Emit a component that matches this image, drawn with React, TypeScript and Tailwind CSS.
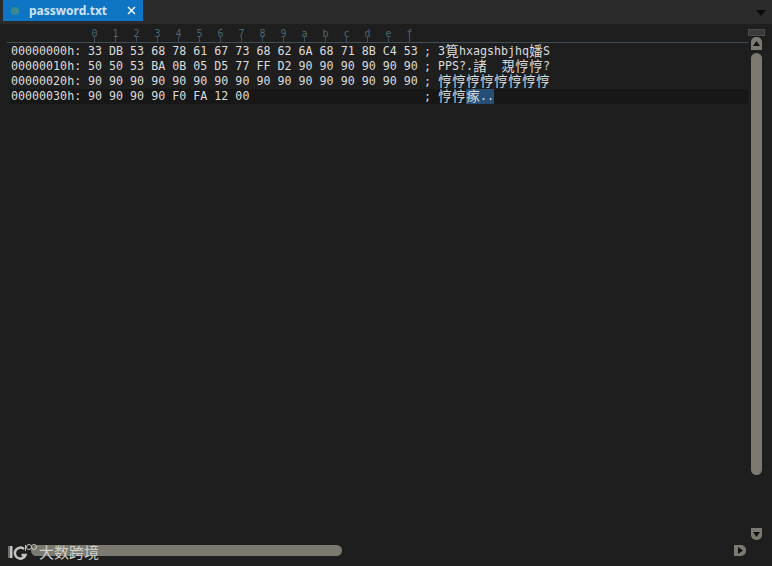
const rows = [
  { a: "00000000h:", h: "33 DB 53 68 78 61 67 73 68 62 6A 68 71 8B C4 53", t: "3筧hxagshbjhq嬏S" },
  { a: "00000010h:", h: "50 50 53 BA 0B 05 D5 77 FF D2 90 90 90 90 90 90", t: "PPS?.諸  覝悙悙?" },
  { a: "00000020h:", h: "90 90 90 90 90 90 90 90 90 90 90 90 90 90 90 90", t: "悙悙悙悙悙悙悙悙" },
];
const ticks = ["0","1","2","3","4","5","6","7","8","9","a","b","c","d","e","f"];

function Chars({ t }: { t: string }) {
  return (
    <>
      {Array.from(t).map((c, i) =>
        c.charCodeAt(0) > 255 ? (
          <span key={i} className="inline-block w-[14px] text-center text-[13.5px] leading-[15px]">{c}</span>
        ) : (
          <span key={i} className="inline-block w-[7px] leading-[15px]">{c}</span>
        )
      )}
    </>
  );
}

function Row({ a, h, t, active, sel }: { a: string; h: string; t: string; active?: boolean; sel?: string }) {
  return (
    <div className={`ml-[10px] flex h-[15px] items-center pl-[1px] whitespace-pre ${active ? "bg-[#171717]" : ""}`}>
      <span className="w-[77px]">{a}</span>
      <span className="w-[336px]">{h}</span>
      <span className="w-[14px]">;</span>
      <span className="flex"><Chars t={t} /></span>
      {sel && <span className="flex bg-[#264f78]"><Chars t={sel} /></span>}
    </div>
  );
}

export default function App() {
  return (
    <div className="relative flex h-[566px] w-[772px] flex-col overflow-hidden bg-[#1e1e1e] font-['DejaVu_Sans_Mono','Noto_Sans_CJK_SC',monospace] text-[11.67px] text-[#dcdcdc]">
      <div className="flex h-[24px] shrink-0 items-start justify-between bg-[#2b2b2b] pl-[3px] pr-[6px]">
        <div className="flex h-[21px] w-[140px] items-center bg-[#0e74c4] pl-[8px] pr-[7px] font-['Noto_Sans',sans-serif] text-[12px] font-bold text-[#cfe3f3]">
          <span className="h-[8px] w-[8px] rounded-full bg-[#3d8a8c]" />
          <span className="ml-[10px] flex-1">password.txt</span>
          <svg width="9" height="9" viewBox="0 0 9 9" className="text-white"><path d="M1 1l7 7M8 1l-7 7" stroke="currentColor" strokeWidth="1.4" /></svg>
        </div>
        <svg width="10" height="6" viewBox="0 0 10 6" className="mt-[10px]"><path d="M0 0h10L5 6z" fill="#0b0b0b" /></svg>
      </div>
      <div className="flex min-h-0 flex-1">
        <div className="flex min-w-0 flex-1 flex-col">
          <div className="ml-[7px] flex h-[19px] shrink-0 items-end border-b border-[#3e4f5a] pl-[77px]">
            {ticks.map((c) => (
              <div key={c} className="flex w-[21px] flex-col items-center text-[#4a6672]">
                <span className="text-[10px] leading-[7px]">{c}</span>
                <span className="h-[5px] w-px bg-[#3e4f5a]" />
              </div>
            ))}
          </div>
          <div className="pt-[1px]">
            {rows.map((r) => <Row key={r.a} {...r} />)}
            <Row a="00000030h:" h="90 90 90 90 F0 FA 12 00" t="悙悙" sel="瘃.." active />
          </div>
        </div>
        <div className="flex w-[24px] shrink-0 flex-col items-start pt-[5px]">
          <div className="h-[7px] w-[17px] border border-[#4a4a4a] bg-[#3a3a3a]" />
          <div className="ml-[3px] mt-[1px] flex h-[13px] w-[11px] items-center justify-center rounded-t-[5px] bg-[#7c7a70]">
            <svg width="7" height="5" viewBox="0 0 7 5"><path d="M0 5h7L3.500 0z" fill="#111" /></svg>
          </div>
          <div className="ml-[3px] mt-[3px] h-[422px] w-[11px] rounded-full bg-[#7c7a70]" />
          <div className="ml-[3px] mt-[53px] flex h-[12px] w-[11px] items-center justify-center rounded-b-[5px] bg-[#7c7a70]">
            <svg width="7" height="5" viewBox="0 0 7 5"><path d="M0 0h7L3.500 5z" fill="#111" /></svg>
          </div>
        </div>
      </div>
      <div className="flex h-[21px] shrink-0 items-start pl-[31px] pr-[26px]">
        <div className="h-[11px] w-[311px] rounded-full bg-[#7c7a70]" />
        <div className="ml-auto flex h-[11px] w-[12px] items-center justify-center rounded-r-[5px] bg-[#7c7a70]">
          <svg width="5" height="7" viewBox="0 0 5 7"><path d="M0 0v7l5-3.500z" fill="#111" /></svg>
        </div>
      </div>
      <div className="absolute left-[8px] top-[541px] flex items-center text-[#cfcfca]">
        <svg width="30" height="18" viewBox="0 0 30 18">
          <rect x="0" y="3" width="5" height="12" fill="#6e6e6a" />
          <rect x="2" y="3" width="2" height="12" fill="#c4c4c0" />
          <path d="M16 6a5.500 5.500 0 1 0 1.500 6h-4" fill="none" stroke="#c4c4c0" strokeWidth="2.500" />
          <path d="M17.500 2v6" stroke="#c4c4c0" />
          <circle cx="21" cy="4" r="2.500" fill="none" stroke="#c4c4c0" />
          <circle cx="26" cy="4" r="2.500" fill="none" stroke="#c4c4c0" />
        </svg>
        <span className="ml-[1px] font-['Noto_Sans_CJK_SC',sans-serif] text-[15px]">大数跨境</span>
      </div>
    </div>
  );
}
